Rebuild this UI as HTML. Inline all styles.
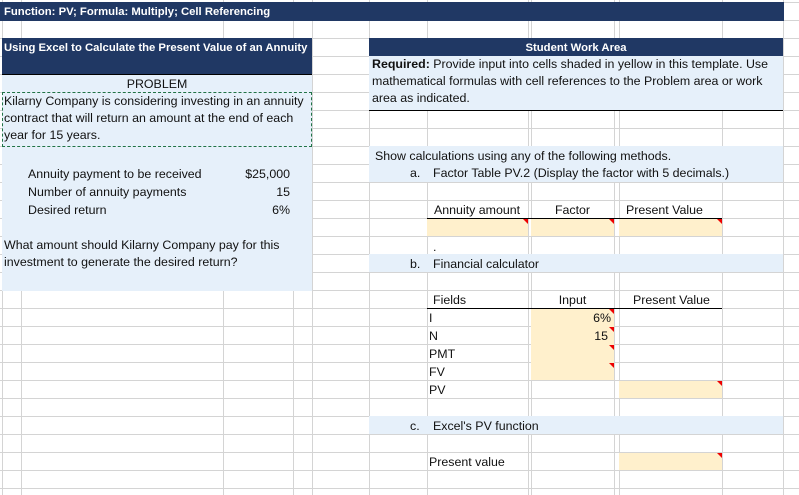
<!DOCTYPE html>
<html><head><style>
body{margin:0;width:799px;height:495px;overflow:hidden;position:relative;background:#fff;font-family:"Liberation Sans",sans-serif;font-size:12.4px;color:#111}
.h{position:absolute;left:0;width:799px;height:1px;background:#d4d4d4}
.v{position:absolute;top:0;height:495px;width:1px;background:#d4d4d4}
.b{position:absolute}
.dk{background:#203864;color:#fff;font-weight:bold}
.lb{background:#e6f0fa}
.y{background:#fff0cc}
.t{position:absolute;white-space:nowrap;line-height:18px}
.bd{font-weight:bold;font-size:11.3px}
.tri{position:absolute;width:0;height:0;border-top:5px solid #e00;border-left:5px solid transparent}
.ul{position:absolute;height:1px;background:#000}
</style></head><body>
<div id="grid"></div>
<script>
var g=document.getElementById('grid'),s='';
for(var y=2;y<495;y+=18)s+='<div class="h" style="top:'+y+'px"></div>';
[2,21,223,293,312,369,427,528,531,614,619,722,783].forEach(function(x){s+='<div class="v" style="left:'+x+'px"></div>'});
g.innerHTML=s;
</script>
<div class="b dk" style="left:0;top:2px;width:784px;height:19px"></div>
<div class="t bd" style="left:4px;top:3px;color:#fff">Function: PV; Formula: Multiply; Cell Referencing</div>
<div class="b dk" style="left:2px;top:38px;width:310px;height:36px"></div>
<div class="t bd" style="left:4px;top:39px;color:#fff">Using Excel to Calculate the Present Value of an Annuity</div>
<div class="ul" style="left:2px;top:74px;width:310px"></div>
<div class="b lb" style="left:2px;top:75px;width:310px;height:216px"></div>
<div class="t" style="left:2px;top:75px;width:310px;text-align:center">PROBLEM</div>
<div class="b" style="left:2px;top:92px;width:308px;height:53px;border:1.5px dashed #217346"></div>
<div class="t" style="left:4px;top:93px;line-height:17px">Kilarny Company is considering investing in an annuity<br>contract that will return an amount at the end of each<br>year for 15 years.</div>
<div class="t" style="left:28px;top:165px">Annuity payment to be received</div>
<div class="t" style="left:28px;top:183px">Number of annuity payments</div>
<div class="t" style="left:28px;top:201px">Desired return</div>
<div class="t" style="left:200px;top:165px;width:90px;text-align:right">$25,000</div>
<div class="t" style="left:200px;top:183px;width:90px;text-align:right">15</div>
<div class="t" style="left:200px;top:201px;width:90px;text-align:right">6%</div>
<div class="t" style="left:4px;top:237px;line-height:17px">What amount should Kilarny Company pay for this<br>investment to generate the desired return?</div>
<div class="b dk" style="left:369px;top:38px;width:414px;height:18px"></div>
<div class="t bd" style="left:369px;top:39px;width:414px;text-align:center;color:#fff">Student Work Area</div>
<div class="b lb" style="left:369px;top:56px;width:414px;height:54px"></div>
<div class="t" style="left:372px;top:56px;line-height:17px">
<b>Required:</b> Provide input into cells shaded in yellow in this template. Use<br>mathematical formulas with cell references to the Problem area or work<br>area as indicated.</div>
<div class="ul" style="left:369px;top:110px;width:414px"></div>
<div class="b lb" style="left:369px;top:146px;width:414px;height:36px"></div>
<div class="t" style="left:375px;top:147px">Show calculations using any of the following methods.</div>
<div class="t" style="left:410px;top:164px">a.</div>
<div class="t" style="left:433px;top:164px">Factor Table PV.2 (Display the factor with 5 decimals.)</div>
<div class="t" style="left:434px;top:201px">Annuity amount</div>
<div class="t" style="left:531px;top:201px;width:83px;text-align:center">Factor</div>
<div class="t" style="left:626px;top:201px">Present Value</div>
<div class="ul" style="left:427px;top:218px;width:295px"></div>
<div class="b y" style="left:427px;top:219px;width:101px;height:17px"></div>
<div class="b y" style="left:531px;top:219px;width:83px;height:17px"></div>
<div class="b y" style="left:619px;top:219px;width:103px;height:17px"></div>
<div class="tri" style="left:523px;top:219px"></div>
<div class="tri" style="left:609px;top:219px"></div>
<div class="tri" style="left:717px;top:219px"></div>
<div class="t" style="left:433px;top:238px">.</div>
<div class="b lb" style="left:369px;top:254px;width:414px;height:18px"></div>
<div class="t" style="left:410px;top:255px">b.</div>
<div class="t" style="left:433px;top:255px">Financial calculator</div>
<div class="t" style="left:433px;top:291px">Fields</div>
<div class="t" style="left:531px;top:291px;width:83px;text-align:center">Input</div>
<div class="t" style="left:633px;top:291px">Present Value</div>
<div class="ul" style="left:427px;top:308px;width:295px"></div>
<div class="b y" style="left:531px;top:309px;width:83px;height:71px"></div>
<div class="tri" style="left:609px;top:309px"></div>
<div class="tri" style="left:609px;top:327px"></div>
<div class="tri" style="left:609px;top:345px"></div>
<div class="tri" style="left:609px;top:363px"></div>
<div class="t" style="left:429px;top:309px">I</div>
<div class="t" style="left:429px;top:327px">N</div>
<div class="t" style="left:429px;top:345px">PMT</div>
<div class="t" style="left:429px;top:363px">FV</div>
<div class="t" style="left:429px;top:381px">PV</div>
<div class="t" style="left:531px;top:309px;width:80px;text-align:right">6%</div>
<div class="t" style="left:531px;top:327px;width:77px;text-align:right">15</div>
<div class="b y" style="left:619px;top:381px;width:103px;height:17px"></div>
<div class="tri" style="left:717px;top:381px"></div>
<div class="b lb" style="left:369px;top:416px;width:414px;height:18px"></div>
<div class="t" style="left:410px;top:417px">c.</div>
<div class="t" style="left:433px;top:417px">Excel's PV function</div>
<div class="t" style="left:429px;top:453px">Present value</div>
<div class="b y" style="left:619px;top:453px;width:103px;height:17px"></div>
<div class="tri" style="left:717px;top:453px"></div>
</body></html>
